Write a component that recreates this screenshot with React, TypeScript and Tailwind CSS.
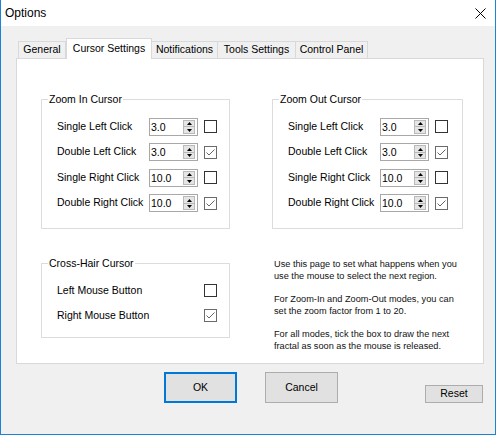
import React from "react";

type Row = { label: string; value: string; checked: boolean };

const rows: Row[] = [
  { label: "Single Left Click", value: "3.0", checked: false },
  { label: "Double Left Click", value: "3.0", checked: true },
  { label: "Single Right Click", value: "10.0", checked: false },
  { label: "Double Right Click", value: "10.0", checked: true },
];

function Check({ checked }: { checked: boolean }) {
  return (
    <div
      className={
        "w-[13px] h-[13px] bg-white border flex items-center justify-center " +
        (checked ? "border-[#6a6a6a]" : "border-[#333333]")
      }
    >
      {checked && (
        <svg width="11" height="11" viewBox="0 0 11 11">
          <path d="M1.5 5.5 L4 8 L9.5 2.5" fill="none" stroke="#666" strokeWidth="1" />
        </svg>
      )}
    </div>
  );
}

function Spinner({ value }: { value: string }) {
  return (
    <div className="w-[49px] h-[18px] border border-[#a8a8a8] bg-white flex items-stretch">
      <div className="flex-1 pl-[1px] leading-[16px] text-[10.5px]">{value}</div>
      <div className="w-[12px] my-[1px] mr-[2px] border border-[#b9b9b9] bg-[#e5e5e5] flex flex-col">
        <div className="flex-1 flex items-center justify-center">
          <svg width="5" height="3" viewBox="0 0 5 3">
            <path d="M0 3 L2.5 0 L5 3Z" fill="#000" />
          </svg>
        </div>
        <div className="flex-1 border-t border-[#b9b9b9] flex items-center justify-center">
          <svg width="5" height="3" viewBox="0 0 5 3">
            <path d="M0 0 L2.5 3 L5 0Z" fill="#000" />
          </svg>
        </div>
      </div>
    </div>
  );
}

function ZoomGroup({ title, width }: { title: string; width: string }) {
  return (
    <fieldset className={"border border-[#dcdcdc] p-0 m-0 " + width}>
      <legend className="ml-[6px] px-[1px] leading-[14px] text-[10.5px]">{title}</legend>
      <div className="pl-[15px] pt-[8px] pb-[12px] flex flex-col">
        {rows.map((r) => (
          <div key={r.label} className="h-[25.5px] flex items-center">
            <div className="w-[92px] text-[10.5px]">{r.label}</div>
            <Spinner value={r.value} />
            <div className="ml-[6px]">
              <Check checked={r.checked} />
            </div>
          </div>
        ))}
      </div>
    </fieldset>
  );
}

const tabs = [
  { name: "General", w: "w-[48px]" },
  { name: "Cursor Settings", w: "w-[86px]" },
  { name: "Notifications", w: "w-[67px]" },
  { name: "Tools Settings", w: "w-[79px]" },
  { name: "Control Panel", w: "w-[73px]" },
];

export default function App() {
  return (
    <div
      className="w-[496px] h-[435px] bg-[#f0f0f0] border-l border-r border-b border-[#1883d7] flex flex-col text-black overflow-hidden"
      style={{ fontFamily: '"Liberation Sans", Arial, sans-serif' }}
    >
      {/* Title bar */}
      <div className="h-[26px] bg-white flex items-center justify-between shrink-0">
        <span className="pl-[4px] text-[12px] leading-[14px]">Options</span>
        <svg width="11" height="11" viewBox="0 0 11 11" className="mr-[9px]">
          <path d="M0.5 0.5 L10.5 10.5 M10.5 0.5 L0.5 10.5" stroke="#000" strokeWidth="1" />
        </svg>
      </div>

      {/* Tabs */}
      <div className="mt-[12px] ml-[17px] h-[21px] flex items-end relative z-10 text-[10.5px]">
        {tabs.map((t) =>
          t.name === "Cursor Settings" ? (
            <div
              key={t.name}
              className={
                "h-[21px] bg-white border-l border-t border-r border-[#d9d9d9] flex items-center justify-center " + t.w
              }
            >
              {t.name}
            </div>
          ) : (
            <div
              key={t.name}
              className={
                "h-[17px] mb-[1px] bg-[#f0f0f0] border-l border-t border-r border-[#d9d9d9] flex items-center justify-center -ml-[1px] first:ml-0 " +
                t.w
              }
            >
              {t.name}
            </div>
          )
        )}
      </div>

      {/* Panel */}
      <div className="-mt-[1px] ml-[15px] w-[468px] h-[306px] bg-white border border-[#d9d9d9] pt-[33px] pl-[24px] text-[10.5px]">
        <div className="grid grid-cols-[189px_191px] gap-x-[42px] gap-y-[27px] items-start">
          <ZoomGroup title="Zoom In Cursor" width="w-[189px]" />
          <ZoomGroup title="Zoom Out Cursor" width="w-[191px]" />

          <fieldset className="border border-[#dcdcdc] p-0 m-0 w-[189px]">
            <legend className="ml-[6px] px-[1px] leading-[14px] text-[10.5px]">Cross-Hair Cursor</legend>
            <div className="pl-[15px] pt-[8px] pb-[9px] flex flex-col">
              {[
                { label: "Left Mouse Button", checked: false },
                { label: "Right Mouse Button", checked: true },
              ].map((r) => (
                <div key={r.label} className="h-[25px] flex items-center">
                  <div className="w-[147px] text-[10.5px]">{r.label}</div>
                  <Check checked={r.checked} />
                </div>
              ))}
            </div>
          </fieldset>

          <div className="pt-[2px] pl-[2px] text-[9.2px] leading-[12px] text-[#111]">
            <p>
              Use this page to set what happens when you
              <br />
              use the mouse to select the next region.
            </p>
            <p className="mt-[11px]">
              For Zoom-In and Zoom-Out modes, you can
              <br />
              set the zoom factor from 1 to 20.
            </p>
            <p className="mt-[11px]">
              For all modes, tick the box to draw the next
              <br />
              fractal as soon as the mouse is released.
            </p>
          </div>
        </div>
      </div>

      {/* Buttons */}
      <div className="mt-[8px] flex items-end text-[10.5px]">
        <button className="ml-[163px] w-[73px] h-[31px] bg-[#e1e1e1] border-2 border-[#0078d7] flex items-center justify-center">
          OK
        </button>
        <button className="ml-[28px] w-[73px] h-[31px] bg-[#e1e1e1] border border-[#adadad] flex items-center justify-center">
          Cancel
        </button>
        <button className="ml-[87px] w-[58px] h-[18px] bg-[#e1e1e1] border border-[#adadad] flex items-center justify-center">
          Reset
        </button>
      </div>
    </div>
  );
}
